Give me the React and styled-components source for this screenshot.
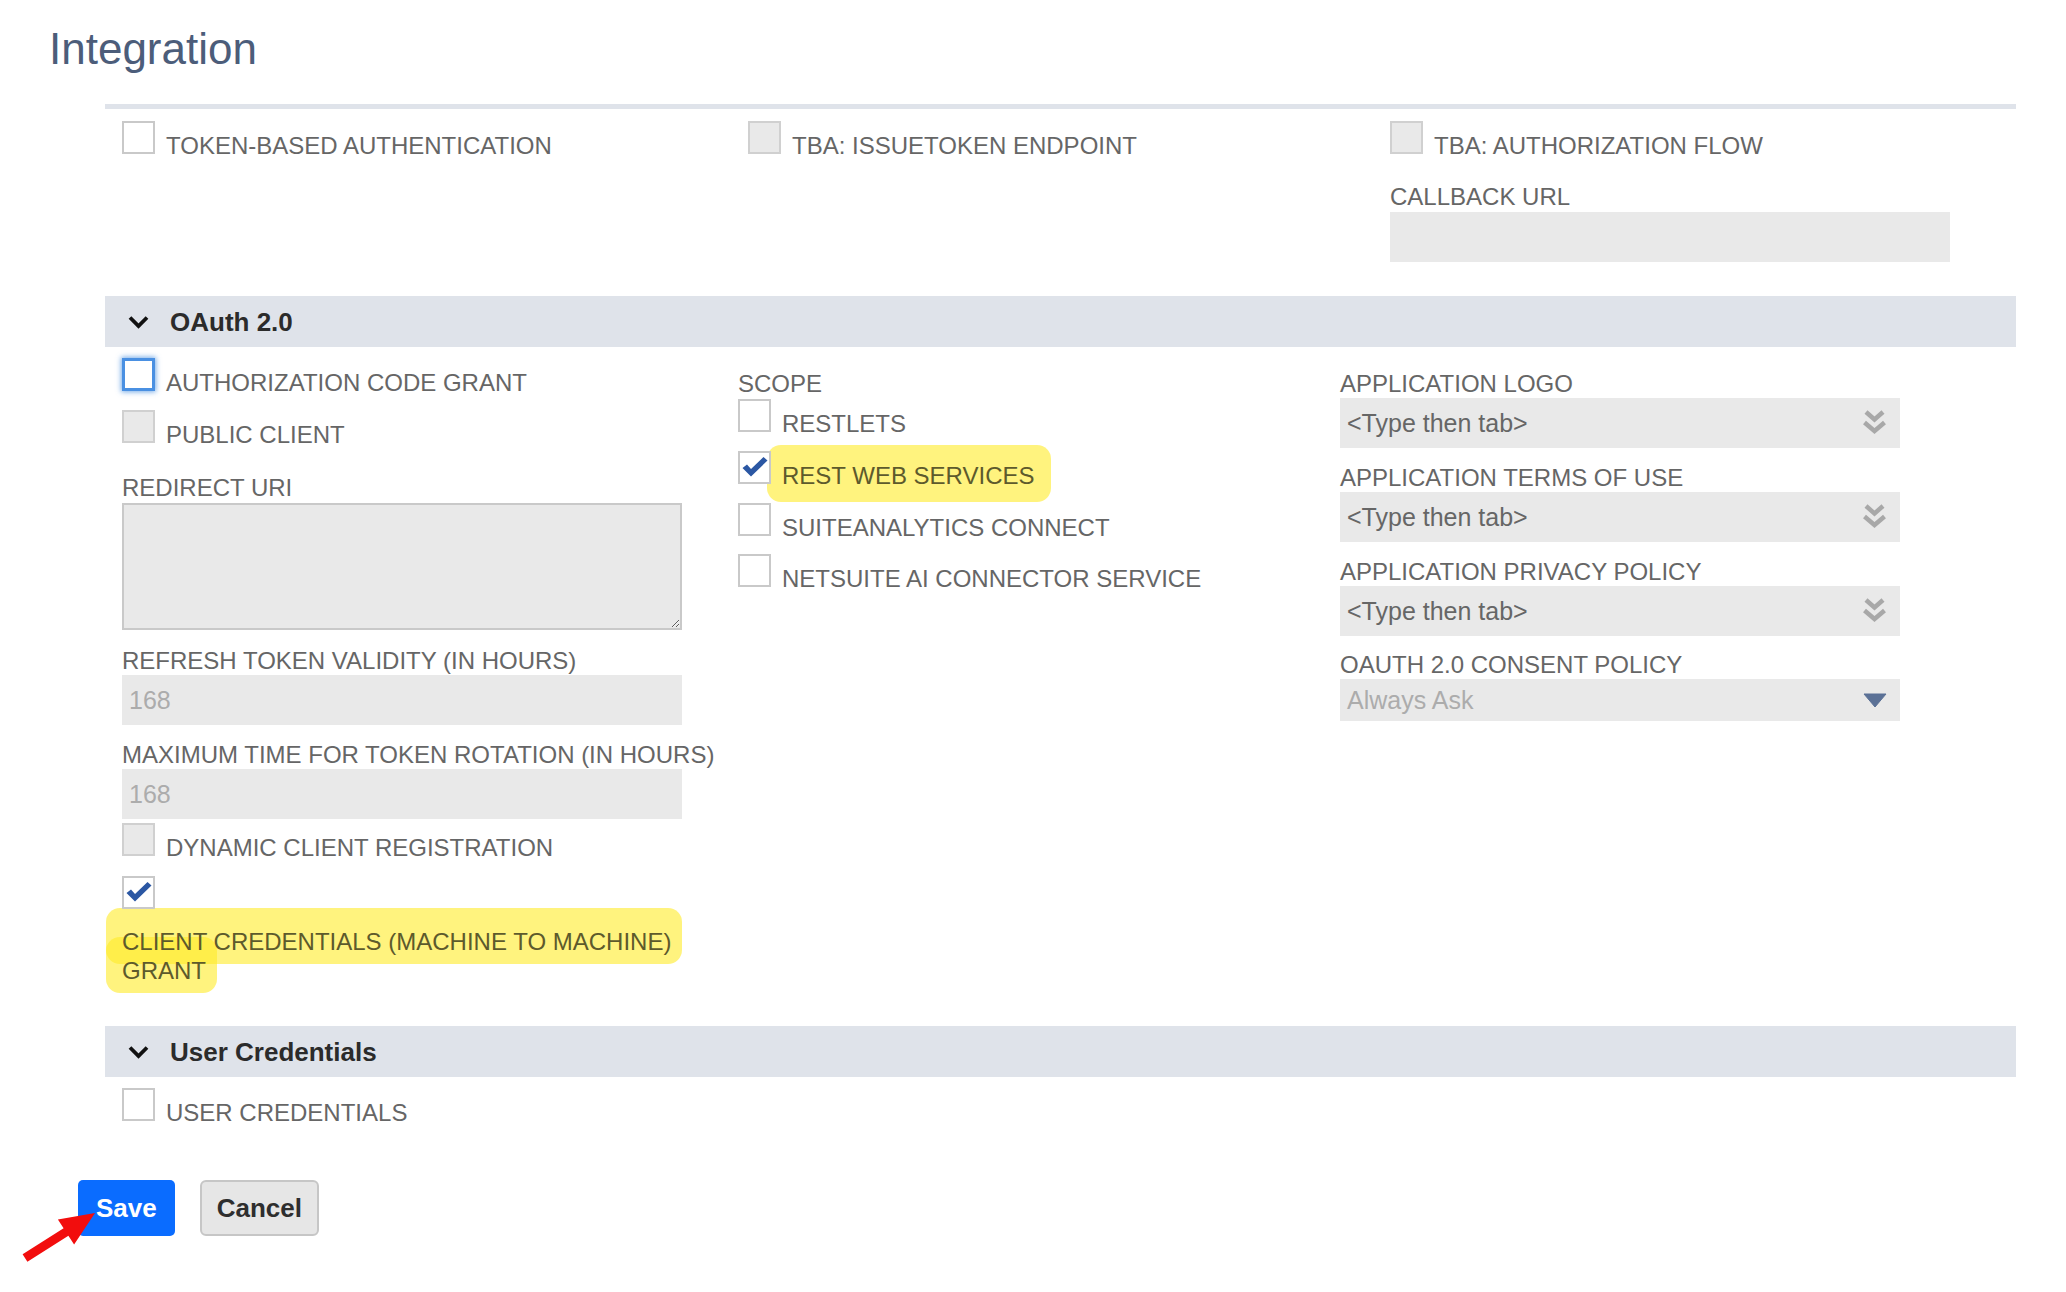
import React from "react";
import styled, { createGlobalStyle, css } from "styled-components";

const GlobalStyle = createGlobalStyle`
  body {
    margin: 0;
    background: #fff;
    font-family: "Liberation Sans", Arial, Helvetica, sans-serif;
  }
`;

const DoubleChevron = () => (
  <svg width="25" height="26" viewBox="0 0 25 26">
    <path d="M4 2 L12.5 9.5 L21 2" fill="none" stroke="#a8a8a8" strokeWidth="4.5" />
    <path d="M2.5 12.5 L12.5 21 L22.5 12.5" fill="none" stroke="#a8a8a8" strokeWidth="4.5" />
  </svg>
);

const Triangle = () => (
  <svg width="24" height="15" viewBox="0 0 24 15">
    <path d="M1 1 L23 1 L12 14 Z" fill="#5b7196" stroke="#5b7196" strokeWidth="1" strokeLinejoin="round" />
  </svg>
);

const Chevron = () => (
  <svg width="21" height="14" viewBox="0 0 21 14">
    <path d="M2 2.5 L10.5 11 L19 2.5" fill="none" stroke="#111" strokeWidth="3.8" />
  </svg>
);

const Tick = () => (
  <svg width="33" height="33" viewBox="0 0 33 33">
    <path d="M4.5 17 L9 13.5 L13 18 L25.5 6 L29.5 9.5 L13 25.5 Z" fill="#2b57a3" />
  </svg>
);

const Checkbox = ({ disabled, focus, checked }) => (
  <Box $disabled={disabled} $focus={focus}>
    {checked && <Tick />}
  </Box>
);

const CheckItem = ({ label, mt, ...rest }) => (
  <CheckRow $mt={mt}>
    <Checkbox {...rest} />
    <CheckText>{label}</CheckText>
  </CheckRow>
);

const Field = ({ label, mt, children }) => (
  <>
    <FieldLabel $mt={mt}>{label}</FieldLabel>
    {children}
  </>
);

const App = () => {
  return (
    <Page>
      <GlobalStyle />
      <Title>Integration</Title>

      <Form>
        <TopRow>
          <Col>
            <CheckItem label="TOKEN-BASED AUTHENTICATION" />
          </Col>
          <Col>
            <CheckItem label="TBA: ISSUETOKEN ENDPOINT" disabled />
          </Col>
          <Col>
            <CheckItem label="TBA: AUTHORIZATION FLOW" disabled />
            <Field label="CALLBACK URL" mt={23}>
              <TextBox $mt={1} />
            </Field>
          </Col>
        </TopRow>

        <SectionHeader>
          <Chevron />
          OAuth 2.0
        </SectionHeader>

        <OAuthGrid>
          <Col>
            <CheckItem label="AUTHORIZATION CODE GRANT" focus />
            <CheckItem label="PUBLIC CLIENT" disabled mt={13} />
            <Field label="REDIRECT URI" mt={25}>
              <TextArea defaultValue="" />
            </Field>
            <Field label="REFRESH TOKEN VALIDITY (IN HOURS)" mt={17}>
              <TextBox $muted>168</TextBox>
            </Field>
            <Field label="MAXIMUM TIME FOR TOKEN ROTATION (IN HOURS)" mt={16}>
              <TextBox $muted>168</TextBox>
            </Field>
            <CheckItem label="DYNAMIC CLIENT REGISTRATION" disabled mt={4} />
            <CheckRow $mt={14}>
              <Checkbox checked />
            </CheckRow>
            <WrapLabel>
              <Marker $pad="20px 11px 9px 16px" $ml={16}>
                <Ink>CLIENT CREDENTIALS (MACHINE TO MACHINE) GRANT</Ink>
              </Marker>
            </WrapLabel>
          </Col>

          <Col>
            <FieldLabel $mt={12}>SCOPE</FieldLabel>
            <CheckItem label="RESTLETS" mt={1} />
            <CheckRow $mt={13}>
              <Checkbox checked />
              <CheckText>
                <Marker $pad="17px 16px 13px 15px" $ml={15}>
                  <Ink>REST WEB SERVICES</Ink>
                </Marker>
              </CheckText>
            </CheckRow>
            <CheckItem label="SUITEANALYTICS CONNECT" mt={13} />
            <CheckItem label="NETSUITE AI CONNECTOR SERVICE" mt={12} />
          </Col>

          <Col>
            <Field label="APPLICATION LOGO" mt={12}>
              <TextBox>
                &lt;Type then tab&gt;
                <DoubleChevron />
              </TextBox>
            </Field>
            <Field label="APPLICATION TERMS OF USE" mt={16}>
              <TextBox>
                &lt;Type then tab&gt;
                <DoubleChevron />
              </TextBox>
            </Field>
            <Field label="APPLICATION PRIVACY POLICY" mt={16}>
              <TextBox>
                &lt;Type then tab&gt;
                <DoubleChevron />
              </TextBox>
            </Field>
            <Field label="OAUTH 2.0 CONSENT POLICY" mt={15}>
              <TextBox $h={42} $muted>
                Always Ask
                <Triangle />
              </TextBox>
            </Field>
          </Col>
        </OAuthGrid>

        <SectionHeader>
          <Chevron />
          User Credentials
        </SectionHeader>

        <UserRow>
          <CheckItem label="USER CREDENTIALS" />
        </UserRow>
      </Form>

      <Buttons>
        <SaveButton>Save</SaveButton>
        <CancelButton>Cancel</CancelButton>
        <Arrow width="85" height="66" viewBox="0 0 85 66">
          <polygon
            points="4.6,54.2 45.6,28.2 39.9,19.4 77,13 56.1,44.6 50.4,35.8 9.4,61.8"
            fill="#f20d0d"
          />
        </Arrow>
      </Buttons>
    </Page>
  );
};

export default App;

const Page = styled.div`
  position: relative;
  width: 2066px;
  min-height: 1292px;
`;

const Title = styled.h1`
  margin: 24px 0 0 49px;
  font-size: 44px;
  line-height: 50px;
  font-weight: normal;
  color: #4c5d7a;
`;

const Form = styled.div`
  margin: 30px 0 0 105px;
  width: 1911px;
`;

const TopRow = styled.div`
  display: grid;
  grid-template-columns: 626px 642px 1fr;
  border-top: 5px solid #dfe3ea;
  padding: 12px 0 34px 17px;
`;

const Col = styled.div`
  display: flex;
  flex-direction: column;
  align-items: flex-start;
`;

const CheckRow = styled.div`
  display: flex;
  align-items: flex-start;
  margin-top: ${(p) => p.$mt || 0}px;
`;

const Box = styled.span`
  position: relative;
  flex: none;
  display: block;
  width: 33px;
  height: 33px;
  box-sizing: border-box;
  border: 2px solid #c9c9c9;
  background: #fff;

  svg {
    position: absolute;
    left: -2px;
    top: -2px;
  }

  ${(p) =>
    p.$disabled &&
    css`
      background: #e9e9e9;
      border-color: #d0d0d0;
    `}

  ${(p) =>
    p.$focus &&
    css`
      border: 3px solid #4a90e2;
      box-shadow: 0 0 5px 1px rgba(74, 144, 226, 0.75);
    `}
`;

const CheckText = styled.span`
  margin: 11px 0 0 11px;
  font-size: 24px;
  line-height: 28px;
  color: #666;
  white-space: nowrap;
`;

const FieldLabel = styled.div`
  margin-top: ${(p) => p.$mt || 0}px;
  font-size: 24px;
  line-height: 28px;
  color: #666;
  white-space: nowrap;
`;

const TextBox = styled.div`
  margin-top: ${(p) => p.$mt || 0}px;
  width: 560px;
  height: ${(p) => p.$h || 50}px;
  box-sizing: border-box;
  padding: 0 13px 0 7px;
  background: #e9e9e9;
  display: flex;
  align-items: center;
  justify-content: space-between;
  font-size: 25px;
  color: ${(p) => (p.$muted ? "#acacac" : "#666")};
`;

const TextArea = styled.textarea`
  display: block;
  margin: 1px 0 0;
  width: 560px;
  height: 127px;
  box-sizing: border-box;
  border: 2px solid #c9c9c9;
  background: #e9e9e9;
  outline: none;
  resize: both;
`;

const SectionHeader = styled.div`
  height: 51px;
  display: flex;
  align-items: center;
  gap: 21px;
  padding-left: 23px;
  background: #dfe3ea;
  font-size: 26px;
  line-height: 30px;
  font-weight: bold;
  color: #2b2b2b;
`;

const OAuthGrid = styled.div`
  display: grid;
  grid-template-columns: 616px 602px 1fr;
  padding: 11px 0 41px 17px;
`;

const WrapLabel = styled.div`
  margin-top: 18px;
  max-width: 580px;
  font-size: 24px;
  line-height: 29px;
  color: #666;
`;

/* marker stroke drawn behind the label; the ink sits on its own layer
   so that a wrapped second stroke never covers the first line's text */
const Marker = styled.span`
  background: rgba(255, 235, 40, 0.6);
  border-radius: 14px;
  padding: ${(p) => p.$pad};
  margin-left: -${(p) => p.$ml}px;
  -webkit-box-decoration-break: clone;
  box-decoration-break: clone;
`;

const Ink = styled.span`
  position: relative;
  color: #5d5a2c;
`;

const UserRow = styled.div`
  padding: 11px 0 0 17px;
`;

const Buttons = styled.div`
  position: relative;
  display: flex;
  gap: 25px;
  margin-top: 53px;
  padding-left: 78px;
`;

const SaveButton = styled.button`
  height: 56px;
  padding: 0 18px;
  border: 0;
  border-radius: 5px;
  background: #0a6cff;
  color: #fff;
  font-family: "Liberation Sans", Arial, sans-serif;
  font-size: 26px;
  font-weight: bold;
  cursor: pointer;
`;

const CancelButton = styled.button`
  height: 56px;
  padding: 0 15px;
  border: 2px solid #c6c6c6;
  border-radius: 6px;
  background: #e6e6e6;
  color: #2e2e2e;
  font-family: "Liberation Sans", Arial, sans-serif;
  font-size: 26px;
  font-weight: bold;
  cursor: pointer;
`;

const Arrow = styled.svg`
  position: absolute;
  left: 18px;
  top: 20px;
`;
